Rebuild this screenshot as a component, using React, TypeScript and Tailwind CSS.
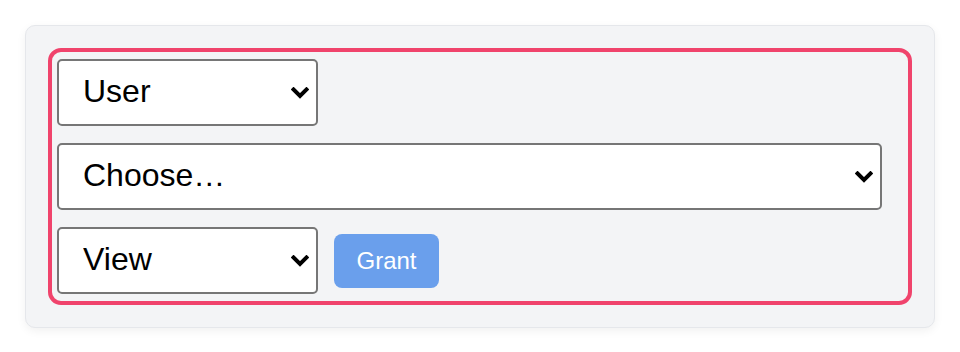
import { useState } from 'react'

function Chevron() {
  return (
    <svg
      className="pointer-events-none absolute right-[9px] top-1/2 -translate-y-1/2"
      width="18"
      height="12"
      viewBox="0 0 18 12"
      fill="none"
    >
      <polyline points="2.5,2.5 9,9 15.5,2.5" stroke="#000" strokeWidth="4" strokeLinecap="square" />
    </svg>
  )
}

function Select({
  value,
  onChange,
  options,
  className,
}: {
  value: string
  onChange: (v: string) => void
  options: string[]
  className: string
}) {
  return (
    <div className={`relative ${className}`}>
      <select
        value={value}
        onChange={(e) => onChange(e.target.value)}
        className="h-[67px] w-full appearance-none rounded-[5px] border-2 border-[#767676] bg-white pb-[4px] pl-[24px] pr-10 text-[32px] text-black outline-none"
      >
        {options.map((o) => (
          <option key={o}>{o}</option>
        ))}
      </select>
      <Chevron />
    </div>
  )
}

export default function App() {
  const [kind, setKind] = useState('User')
  const [who, setWho] = useState('Choose…')
  const [perm, setPerm] = useState('View')

  return (
    <div className="min-h-[352px] bg-white p-[25px] font-['Liberation_Sans',Arial,sans-serif]">
      <div className="w-[910px] rounded-[10px] border border-[#e5e7eb] bg-[#f3f4f6] p-[22px] shadow-[0_3px_10px_rgba(0,0,0,0.06)]">
        <div className="flex flex-col gap-[17px] rounded-[13px] border-4 border-[#f0436c] pb-[7px] pl-[5px] pr-[26px] pt-[7px]">
          <Select value={kind} onChange={setKind} options={['User', 'Group']} className="w-[261px]" />
          <Select value={who} onChange={setWho} options={['Choose…']} className="w-full" />
          <div className="flex items-center gap-4">
            <Select value={perm} onChange={setPerm} options={['View', 'Edit', 'Admin']} className="w-[261px]" />
            <button className="h-[54px] w-[105px] rounded-[8px] bg-[#6a9fec] text-[24px] text-white">
              Grant
            </button>
          </div>
        </div>
      </div>
    </div>
  )
}
